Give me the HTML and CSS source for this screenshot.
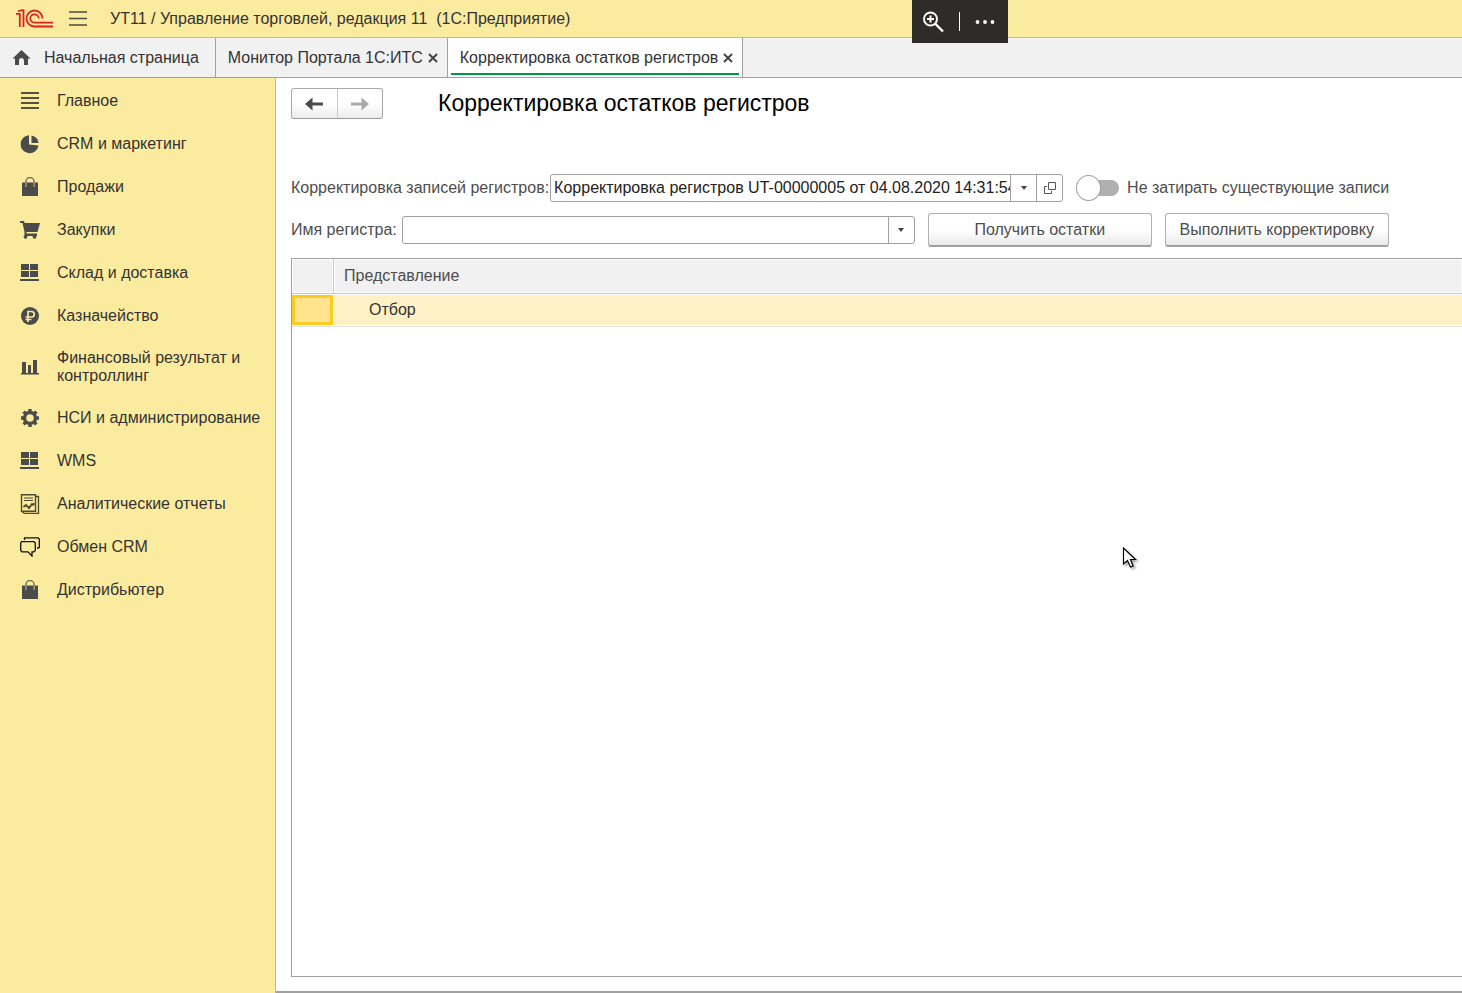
FILE: index.html
```html
<!DOCTYPE html>
<html lang="ru">
<head>
<meta charset="utf-8">
<title>Корректировка остатков регистров</title>
<link rel="stylesheet" href="styles.css">
</head>
<body>
<svg class="defs" aria-hidden="true">
  <symbol id="bag" viewBox="0 0 20 20"><path d="M2 5.500h3v4h1.500v-4h7v4H15v-4h3V19H2z" fill="#4b4b4b"/><path d="M6 9V4.500a4 4 0 0 1 8 0V9" fill="none" stroke="#77735c" stroke-width="1.500"/></symbol>
  <symbol id="boxes" viewBox="0 0 20 20"><path d="M1 1h8v6H1zM10 1h8v6h-8zM1 8h8v6H1zM10 8h8v6h-8zM0 16h19v2H0z" fill="#4b4b4b"/></symbol>
  <symbol id="close" viewBox="0 0 10 10"><path d="M1 1l8 8M9 1L1 9" stroke="#444" stroke-width="2"/></symbol>
  <symbol id="caret" viewBox="0 0 6 4"><path d="M0 0h6L3 4z" fill="#444"/></symbol>
</svg>

<header class="titlebar">
  <svg class="logo" viewBox="0 0 38 20" fill="none" stroke="#dd211f" stroke-width="1.800">
    <path d="M0 4.800h3.800V18M2 2.500Q3.500 1.200 7.500 1.200V18"/>
    <path d="M26.500 9.500a8 8 0 1 0-8 8H37M22.700 9.500a4.200 4.200 0 1 0-4.200 4.200H37"/>
  </svg>
  <button class="menu" aria-label="Меню"><svg viewBox="0 0 18 15"><path d="M0 1h18M0 7.500h18M0 14h18" stroke="#4b4b3e" stroke-width="1.300"/></svg></button>
  <span class="app-name">УТ11 / Управление торговлей, редакция 11&nbsp; (1С:Предприятие)</span>
  <div class="viewer-tools">
    <button aria-label="Увеличить"><svg width="22" height="22" viewBox="0 0 22 22" fill="none" stroke="#fff"><circle cx="8.500" cy="8" r="6.500" stroke-width="2"/><path d="M5 8h7M8.500 4.500v7" stroke-width="2"/><path d="M13 12.500l8 8" stroke-width="2.400"/></svg></button>
    <span class="tool-line"></span>
    <button aria-label="Ещё"><svg width="20" height="4" viewBox="0 0 20 4" fill="#fff"><circle cx="2.500" cy="2" r="1.900"/><circle cx="10" cy="2" r="1.900"/><circle cx="17.500" cy="2" r="1.900"/></svg></button>
  </div>
</header>

<nav class="tabs">
  <a class="tab home" href="#"><svg width="18" height="16" viewBox="0 0 18 16"><path d="M9 0l9 8.500h-2.500V15h-4v-4.500a2.500 2.500 0 0 0-5 0V15h-4V8.500H0z" fill="#4b4b4b"/></svg>Начальная страница</a>
  <div class="tab"><a href="#">Монитор Портала 1С:ИТС</a><button aria-label="Закрыть"><svg><use href="#close"/></svg></button></div>
  <div class="tab active"><a href="#">Корректировка остатков регистров</a><button aria-label="Закрыть"><svg><use href="#close"/></svg></button></div>
</nav>

<div class="workspace">
  <nav class="sidebar">
    <a href="#"><svg viewBox="0 0 20 20"><path d="M1 2h18M1 7h18M1 12h18M1 17h18" stroke="#55513f" stroke-width="2"/></svg><span>Главное</span></a>
    <a href="#"><svg viewBox="0 0 20 20" fill="#4b4b4b"><path d="M9 1.200a9 9 0 1 0 9.500 10.300L9 10.500z"/><path d="M11.500 1.500a8.500 8.500 0 0 1 7 7.500h-7z"/></svg><span>CRM и маркетинг</span></a>
    <a href="#"><svg><use href="#bag"/></svg><span>Продажи</span></a>
    <a href="#"><svg viewBox="0 0 20 20" fill="#4b4b4b"><path d="M0 1h4l.7 2H20l-2.500 9H6.500v1.500H17V16H4.500v-4L2.500 3H0z"/><circle cx="5.500" cy="16.800" r="1.900"/><circle cx="14.500" cy="16.800" r="1.900"/></svg><span>Закупки</span></a>
    <a href="#"><svg><use href="#boxes"/></svg><span>Склад и доставка</span></a>
    <a href="#"><svg viewBox="0 0 20 20"><circle cx="10" cy="10" r="9" fill="#4b4b4b"/><path d="M8 16V5.500h3.500a2.700 2.700 0 0 1 0 5.500H5.500M5.500 13.500h6" fill="none" stroke="#fbeb9e" stroke-width="1.700"/></svg><span>Казначейство</span></a>
    <a href="#"><svg viewBox="0 0 20 20"><path d="M2 5h4v11H2zM8 8h3v8H8zM13 3h4v13h-4zM1 16h18v1.500H1z" fill="#4b4b4b"/></svg><span>Финансовый результат и контроллинг</span></a>
    <a href="#"><svg viewBox="0 0 20 20" fill="none" stroke="#4b4b4b"><circle cx="10" cy="10" r="5.500" stroke-width="3.400"/><path d="M10 1v3M10 16v3M1 10h3M16 10h3M3.600 3.600l2.200 2.200M14.200 14.200l2.200 2.200M3.600 16.400l2.200-2.200M14.200 5.800l2.200-2.200" stroke-width="3.400"/></svg><span>НСИ и администрирование</span></a>
    <a href="#"><svg><use href="#boxes"/></svg><span>WMS</span></a>
    <a href="#"><svg viewBox="0 0 20 20" fill="none" stroke="#4f4a32"><path d="M1.500.8h14v16.500h-14z" stroke-width="1.400"/><path d="M16 2.500h2.500v17H4.500L2 17.500" stroke-width="1.300"/><path d="M4 4h9M4 6.500h9" stroke-width="1.200"/><path d="M3.500 13l2.500-2 3 3 3-4 1 .8 1.500-1.500" stroke-width="1.900"/></svg><span>Аналитические отчеты</span></a>
    <a href="#"><svg viewBox="0 0 20 20" fill="none" stroke="#111" stroke-width="1.300"><path d="M1.500 4.700h12.500l1.300 1.300v7.500L14 14.800h-2V19l-4-4.200H2L.7 13.500V6z"/><path d="M4.500 3V.8H18l1.300 1.200v8.500L18 11h-1"/></svg><span>Обмен CRM</span></a>
    <a href="#"><svg><use href="#bag"/></svg><span>Дистрибьютер</span></a>
  </nav>

  <main class="page">
    <div class="page-head">
      <div class="history">
        <button aria-label="Назад"><svg viewBox="0 0 18 14"><path d="M0 7l7.500-6.500v5H18v3H7.500v5z" fill="#4b4b4b"/></svg></button>
        <button aria-label="Вперед" disabled><svg viewBox="0 0 18 14"><path d="M18 7l-7.500-6.500v5H0v3h10.500v5z" fill="#aaa"/></svg></button>
      </div>
      <h1>Корректировка остатков регистров</h1>
    </div>

    <form class="form">
      <div class="row">
        <label for="doc">Корректировка записей регистров:</label>
        <div class="field field-doc">
          <input id="doc" type="text" value="Корректировка регистров UT-00000005 от 04.08.2020 14:31:54">
          <button type="button" aria-label="Выбрать"><svg class="caret"><use href="#caret"/></svg></button>
          <button type="button" aria-label="Открыть"><svg width="12" height="12" viewBox="0 0 12 12" fill="none" stroke="#555"><path d="M4.500.5h7v7h-7z"/><path d="M3 4.500H.5v7h7V9"/></svg></button>
        </div>
        <label class="switch"><input type="checkbox"><span>Не затирать существующие записи</span></label>
      </div>
      <div class="row">
        <label for="register">Имя регистра:</label>
        <div class="field">
          <input id="register" type="text">
          <button type="button" aria-label="Выбрать"><svg class="caret"><use href="#caret"/></svg></button>
        </div>
        <div class="actions">
          <button type="button">Получить остатки</button>
          <button type="button">Выполнить корректировку</button>
        </div>
      </div>
    </form>

    <div class="grid">
      <table>
        <thead><tr><th class="mark"></th><th>Представление</th></tr></thead>
        <tbody><tr><td class="mark"><div class="cell-focus"></div></td><td>Отбор</td></tr></tbody>
      </table>
    </div>
  </main>
</div>

<svg class="cursor" viewBox="0 0 15 22"><path d="M1.500 1v16l4-3.500 3 6.500 2.500-1-2.500-6.500h5z" fill="#fff" stroke="#000" stroke-width="1.200"/></svg>
</body>
</html>
```

FILE: styles.css
```css
* { box-sizing: border-box; }
body {
  margin: 0;
  min-height: 100vh;
  display: flex;
  flex-direction: column;
  font: 16px/18px "Liberation Sans", Arial, sans-serif;
  color: #333;
  background: #fff;
  position: relative;
  overflow-x: hidden;
}
a { color: inherit; text-decoration: none; }
button, input { font: inherit; color: inherit; margin: 0; }
button { padding: 0; border: 0; background: none; }
svg { display: block; flex: none; }
.defs { position: absolute; width: 0; height: 0; }

.titlebar {
  position: relative;
  display: flex;
  align-items: center;
  height: 38px;
  padding-left: 16px;
  background: #fbeb9e;
  border-bottom: 1px solid #c9bd78;
}
.logo { width: 38px; height: 20px; }
.menu { margin-left: 15px; }
.menu svg { width: 18px; height: 15px; }
.app-name { margin-left: 23px; }
.viewer-tools {
  position: absolute;
  top: 0;
  left: 912px;
  z-index: 1;
  width: 96px;
  height: 43px;
  padding: 0 11px 0 10px;
  display: flex;
  align-items: center;
  gap: 15px;
  background: #2d2c28;
}
.tool-line { width: 1px; height: 19px; background: #fff; }

.tabs {
  display: flex;
  height: 40px;
  background: #f1f1f1;
  border-bottom: 1px solid #a0a0a0;
}
.tab {
  display: flex;
  align-items: center;
  gap: 5px;
  padding: 0 9px 0 12px;
  border-right: 1px solid #a0a0a0;
}
.tab svg { width: 10px; height: 10px; }
.tab.home { gap: 13px; padding-right: 16px; }
.home svg { width: 19px; height: 16px; }
.tab.active {
  position: relative;
  background: #fff;
}
.tab.active::after {
  content: "";
  position: absolute;
  left: 3px;
  right: 3px;
  bottom: 2px;
  height: 2px;
  background: #009646;
}

.workspace { flex: 1; display: flex; }
.sidebar {
  flex: none;
  width: 276px;
  padding-top: 1px;
  background: #fbeb9e;
  border-right: 1px solid #c9bd78;
}
.sidebar a {
  display: flex;
  align-items: center;
  gap: 17px;
  min-height: 43px;
  padding: 12px 8px 11px 20px;
}
.sidebar svg { width: 20px; height: 20px; }

.page {
  flex: 1;
  min-width: 0;
  display: flex;
  flex-direction: column;
  padding: 10px 0 14px 15px;
  border-bottom: 2px solid #a0a0a0;
}
.page-head { display: flex; align-items: center; gap: 55px; }
.history {
  display: flex;
  width: 92px;
  height: 31px;
  border: 1px solid #aaa;
  border-bottom-color: #999;
  border-radius: 3px;
  background: linear-gradient(#fff 50%, #ececec);
}
.history button { flex: 1; display: flex; align-items: center; justify-content: center; }
.history button + button { border-left: 1px solid #ccc; }
.history svg { width: 18px; height: 14px; }
h1 { margin: 0; padding-bottom: 2px; font-size: 23px; line-height: 28px; font-weight: normal; color: #000; }

.form { margin-top: 55px; display: flex; flex-direction: column; gap: 11px; color: #4d4d4d; }
.row { display: flex; align-items: center; white-space: nowrap; }
.field {
  display: flex;
  width: 513px;
  height: 28px;
  margin: 0 13px 0 5px;
  border: 1px solid #a0a0a0;
  border-radius: 3px;
  background: #fff;
}
.field-doc { margin-left: 1px; }
.field input { flex: 1; min-width: 0; padding: 0; margin-left: 3px; border: 0; outline: 0; background: none; color: #222; }
.field button { width: 26px; display: flex; align-items: center; justify-content: center; border-left: 1px solid #a0a0a0; }
.caret { width: 6px; height: 4px; }
.switch { display: flex; align-items: center; gap: 8px; }
.switch input {
  appearance: none;
  display: flex;
  align-items: center;
  width: 43px;
  height: 24px;
}
.switch input::before {
  content: "";
  width: 24px;
  height: 24px;
  border: 1px solid #a0a0a0;
  border-radius: 50%;
  background: #fff;
  z-index: 1;
}
.switch input::after {
  content: "";
  width: 31px;
  height: 16px;
  margin-left: -12px;
  border-radius: 8px;
  background: #b0b0b0;
}
.actions { display: flex; gap: 13px; }
.actions button {
  width: 224px;
  height: 34px;
  border: 1px solid #b0b0b0;
  border-bottom: 2px solid #a0a0a0;
  border-radius: 3px;
  background: linear-gradient(#fff 50%, #e9e9e9);
}

.grid {
  flex: 1;
  margin-top: 11px;
  border: 1px solid #a0a0a0;
  border-right: 0;
}
table { width: 100%; border-collapse: separate; border-spacing: 0; table-layout: fixed; }
th {
  height: 35px;
  padding: 0 10px;
  text-align: left;
  font-weight: normal;
  color: #4d4d4d;
  background: #f1f1f1;
  border-bottom: 1px solid #c8c8c8;
  box-shadow: inset 0 0 0 1px #fff;
}
td {
  height: 33px;
  padding: 0 35px;
  background: #fef1c5;
  border-bottom: 1px solid #e2e2e2;
  box-shadow: inset 0 1px #fff, inset 0 -1px #fff;
}
.mark { width: 42px; }
th.mark { border-right: 1px solid #c8c8c8; }
td.mark { padding: 1px 1px 1px 0; }
.cell-focus { height: 30px; border: 3px solid #fccb22; background: #ffe48d; }

.cursor { position: absolute; left: 1122px; top: 547px; width: 15px; height: 22px; filter: drop-shadow(2px 2px 1px #0005); }
```
